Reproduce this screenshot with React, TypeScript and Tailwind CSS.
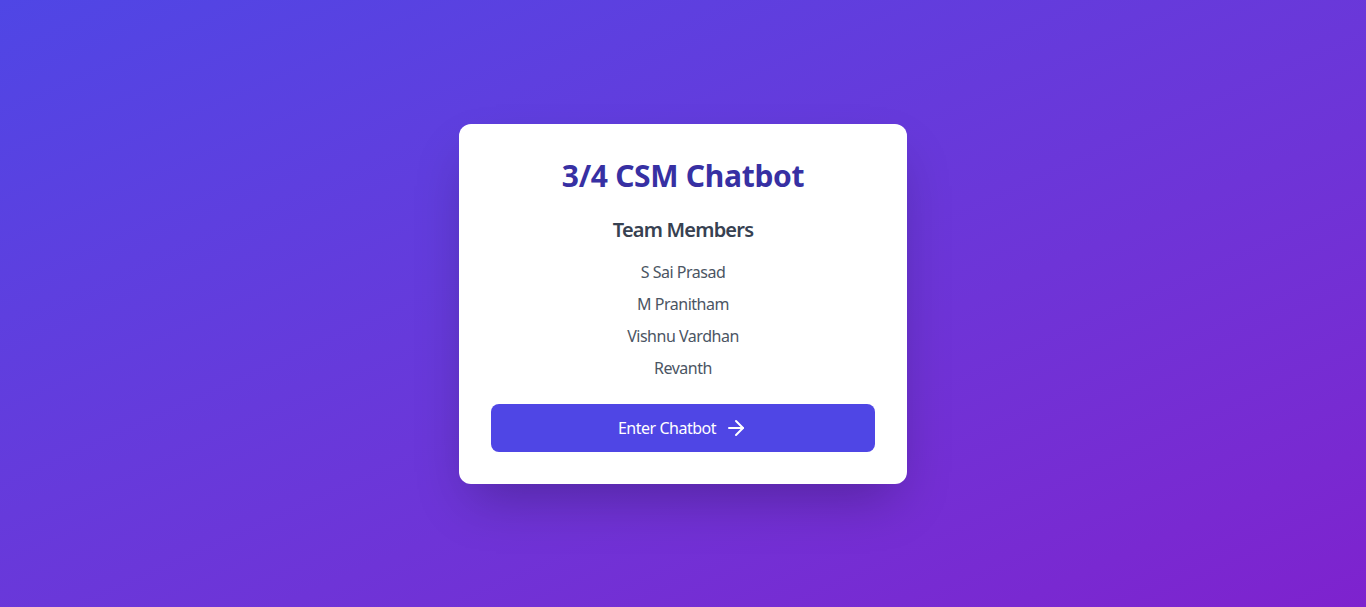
import { ArrowRight } from "lucide-react"

const members = ["S Sai Prasad", "M Pranitham", "Vishnu Vardhan", "Revanth"]

export default function App() {
  return (
    <div
      className="min-h-screen flex items-center justify-center bg-gradient-to-br from-[#4f46e5] to-[#7e22ce] p-4"
      style={{ fontFamily: '"Noto Sans", "Open Sans", sans-serif' }}
    >
      <div className="w-full max-w-md bg-white rounded-xl shadow-2xl p-8 text-center">
        <h1 className="text-3xl leading-[40px] font-bold text-[#3730a3] mb-5 tracking-[-0.01em]">3/4 CSM Chatbot</h1>

        <h2 className="text-xl font-semibold text-[#374151] mb-4 tracking-[-0.04em]">Team Members</h2>
        <ul className="space-y-2 text-[#4b5563] tracking-[-0.03em]">
          {members.map((name) => (
            <li key={name}>{name}</li>
          ))}
        </ul>

        <button className="mt-6 w-full h-12 flex items-center justify-center rounded-lg bg-[#4f46e5] text-white tracking-[-0.03em]">
          Enter Chatbot
          <ArrowRight className="ml-2 w-6 h-6" />
        </button>
      </div>
    </div>
  )
}
